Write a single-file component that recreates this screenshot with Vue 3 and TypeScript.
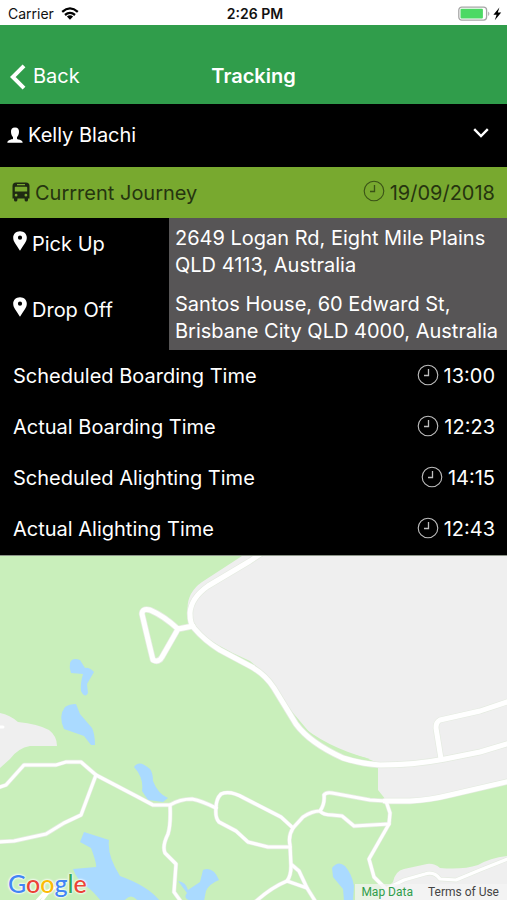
<script setup lang="ts">
interface TimeRow {
  label: string
  time: string
}

const passenger = 'Kelly Blachi'
const journeyDate = '19/09/2018'

const stops: { label: string; address: string }[] = [
  { label: 'Pick Up', address: '2649 Logan Rd, Eight Mile Plains QLD 4113, Australia' },
  { label: 'Drop Off', address: 'Santos House, 60 Edward St, Brisbane City QLD 4000, Australia' },
]

const times: TimeRow[] = [
  { label: 'Scheduled Boarding Time', time: '13:00' },
  { label: 'Actual Boarding Time', time: '12:23' },
  { label: 'Scheduled Alighting Time', time: '14:15' },
  { label: 'Actual Alighting Time', time: '12:43' },
]

const majorRoads: string[] = [
  'M262 -3 L250 5 L208 30 Q191 42 190 57 Q190 68 194 72 Q205 85 220 94 L250 110 Q265 118 274 132 L296 168 Q310 187 343 202 Q362 208 380 209 Q415 209 445 203 L480 196 L510 187',
  'M385 245 L410 245 Q430 244 450 239 L510 225',
  'M441 203 L436 172 Q436 166 440 164 L480 155 L510 145',
  'M193 70 L178 73 L162 101 Q159 107 153 104 Q149 88 142 58 Q142 52 150 54 Q164 60 178 73',
]

const minorRoads: string[] = [
  'M-3 232 L6 229 L24 209 H56 L66 206 L81 206 L96 219 L138 241 L153 249 L170 249 Q180 243 192 243 Q202 245 216 252',
  'M96 219 L81 259 L64 267 L46 278 L14 285 L-3 286',
  'M170 249 Q171 268 168 278 Q162 290 165 297 L176 308 L174 336 L182 347',
  'M216 252 Q216 243 221 238 Q230 234 244 242 L281 261 L293 272 L303 261 Q312 255 320 255 Q325 248 324 239 Q326 236 332 237 L370 244 L386 245',
  'M216 252 Q215 262 219 266 L236 275 L248 286 L268 291 L290 291',
  'M293 272 Q288 280 290 289 L291 310 Q291 320 287 325 Q270 332 253 348',
  'M320 255 Q323 259 332 259 L342 260 L354 270 L389 268',
  'M386 245 L390 257 L389 268 L369 303 L374 321 L386 333 L404 324 L425 318 Q434 315 440 323 L456 324 L480 314 L510 302',
  'M292 309 L299 315 L307 332 L317 348',
  'M287 325 L307 332',
]
</script>

<template>
  <div class="screen">
    <div class="status">
      <div class="carrier">
        <span>Carrier</span>
        <svg width="18" height="13" viewBox="0 0 18 13" aria-hidden="true">
          <g fill="none" stroke="#000" stroke-width="2.3">
            <path d="M1.2 4.8 Q9 -2 16.8 4.8" />
            <path d="M4 8 Q9 3.8 14 8" />
          </g>
          <path d="M5.9 9.6 Q9 7 12.1 9.6 L9 12.8 Z" fill="#000" />
        </svg>
      </div>
      <strong>2:26 PM</strong>
      <div class="power">
        <svg width="44" height="16" viewBox="0 0 44 16" aria-hidden="true">
          <rect x="0.8" y="1.1" width="27.8" height="13" rx="3" fill="#fff" stroke="#a6a6a6" stroke-width="1.3" />
          <rect x="2.5" y="2.8" width="22.4" height="9.6" rx="1" fill="#4cd964" />
          <path d="M30.2 5.4 Q32.6 7.6 30.2 10 Z" fill="#a6a6a6" />
          <path d="M41.4 1.6 L35.4 8.8 H38.6 L36.8 14.2 L43.2 6.6 H39.8 Z" fill="#000" />
        </svg>
      </div>
    </div>

    <header class="nav">
      <button class="back" type="button">
        <svg width="16" height="26" viewBox="0 0 16 26" aria-hidden="true">
          <path d="M14 1.8 L2.8 13 L14 24.2" fill="none" stroke="#fff" stroke-width="4" />
        </svg>
        <span>Back</span>
      </button>
      <h1>Tracking</h1>
    </header>

    <main class="content">
      <button class="passenger" type="button">
        <svg width="16" height="18" viewBox="0 0 16 18" aria-hidden="true">
          <path
            d="M8 0.6 C11 0.6 12.2 2.4 12 5.1 C11.9 7.6 10.9 9.4 10 10.3 V11.8 C10.2 13 15.4 12.2 15.7 15.8 H0.3 C0.6 12.2 5.8 13 6 11.8 V10.3 C5.1 9.4 4.1 7.6 4 5.1 C3.8 2.4 5 0.6 8 0.6 Z"
            fill="#fff"
          />
        </svg>
        <span class="name">{{ passenger }}</span>
        <svg class="chevron" width="16" height="11" viewBox="0 0 16 11" aria-hidden="true">
          <path d="M1.2 1.2 L8 8 L14.8 1.2" fill="none" stroke="#fff" stroke-width="2.4" />
        </svg>
      </button>

      <div class="journey">
        <svg class="bus" width="18" height="20" viewBox="0 0 18 20" aria-hidden="true">
          <path
            fill-rule="evenodd"
            d="M4 0.5 H14 Q17.5 0.5 17.5 4 V16.5 H16 V18 Q16 19.5 14.3 19.5 Q12.6 19.5 12.6 18 V16.5 H5.4 V18 Q5.4 19.5 3.7 19.5 Q2 19.5 2 18 V16.5 H0.5 V4 Q0.5 0.5 4 0.5 Z M5 2 V3.2 H13 V2 Z M3.6 4.8 Q2.8 4.8 2.8 5.6 V9.6 H15.2 V5.6 Q15.2 4.8 14.4 4.8 Z M4.1 11.8 A1.4 1.4 0 1 0 4.1 14.6 A1.4 1.4 0 1 0 4.1 11.8 Z M13.9 11.8 A1.4 1.4 0 1 0 13.9 14.6 A1.4 1.4 0 1 0 13.9 11.8 Z"
            fill="#1f2a12"
          />
        </svg>
        <h2>Currrent Journey</h2>
        <span class="stamp">
          <svg width="22" height="22" viewBox="0 0 22 22" aria-hidden="true">
            <g fill="none" stroke="currentColor">
              <circle cx="11" cy="11" r="9.8" stroke-width="1.1" />
              <path d="M11.5 5 V11.5 H7" stroke-width="1.3" />
            </g>
          </svg>
          <span class="value">{{ journeyDate }}</span>
        </span>
      </div>

      <dl class="stops">
        <div v-for="stop in stops" :key="stop.label" class="stop">
          <dt>
            <svg width="14" height="20" viewBox="0 0 14 20" aria-hidden="true">
              <path
                fill-rule="evenodd"
                d="M7 0.3 C11 0.3 13.8 3.1 13.8 6.7 C13.8 10.8 10.6 13.5 7 19.8 C3.4 13.5 0.2 10.8 0.2 6.7 C0.2 3.1 3 0.3 7 0.3 Z M7 4.6 A2.1 2.1 0 1 0 7 8.8 A2.1 2.1 0 1 0 7 4.6 Z"
                fill="#fff"
              />
            </svg>
            <span>{{ stop.label }}</span>
          </dt>
          <dd>{{ stop.address }}</dd>
        </div>
      </dl>

      <dl class="times">
        <div v-for="row in times" :key="row.label" class="time">
          <dt>{{ row.label }}</dt>
          <dd class="stamp">
            <svg width="22" height="22" viewBox="0 0 22 22" aria-hidden="true">
              <g fill="none" stroke="currentColor">
                <circle cx="11" cy="11" r="9.8" stroke-width="1.1" />
                <path d="M11.5 5 V11.5 H7" stroke-width="1.3" />
              </g>
            </svg>
            <span class="value">{{ row.time }}</span>
          </dd>
        </div>
      </dl>
    </main>

    <section class="map" aria-label="Map">
      <svg class="tiles" viewBox="0 0 507 345" preserveAspectRatio="xMidYMin slice" aria-hidden="true">
        <rect width="507" height="345" fill="#c9efbb" />
        <g fill="#efefef">
          <path d="M242 0 H507 V227 L450 238 L410 244 H386 L378 234 V207 L366 202 Q335 195 310 177 L294 158 L271 128 Q262 114 250 109 L215 91 Q200 81 194 72 L188 58 Q185 38 202 26 Z" />
          <path d="M0 157 Q10 159 18 166 Q38 168 49 174 Q57 180 57 190 H30 Q18 192 10 203 L0 212 Z" />
          <path d="M378 345 L386 333 L393 326 Q395 315 404 313 L427 308 Q434 307 440 312 Q463 314 478 309 Q490 302 507 300 V345 Z" />
        </g>
        <g fill="#aadaff">
          <path d="M70 107 Q72 101 80 104 L85 112 Q89 111 94 116 L87 128 L88 137 Q85 143 81 135 Q80 128 83 118 L71 117 Q69 112 70 107 Z" />
          <path d="M65 151 Q69 148 76 148 L80 158 L92 172 Q95 178 95 189 H91 L84 180 L64 173 Q58 160 65 151 Z" />
          <path d="M134 211 Q139 203 150 213 Q153 217 153 225 Q158 238 168 242 L163 246 L148 244 L142 235 Q144 222 134 211 Z" />
          <path d="M84 276 L109 284 Q107 300 120 320 Q148 330 160 345 H101 Q93 335 86 330 Q77 324 73 313 L96 311 Q97 308 91 292 L80 286 Z" />
          <path d="M178 325 Q186 326 188 334 L200 326 L203 314 Q213 310 219 324 Q209 328 206 335 L204 345 H192 Q182 343 187 337 Z" />
          <path d="M332 312 Q338 304 345 310 Q352 318 354 330 L353 345 H344 L343 333 L333 321 Z" />
        </g>
        <path d="M124 345 Q131 336 138 345 Z" fill="#c9efbb" />
        <path d="M192 71 Q215 90 250 105 L266 118 L253 113 Q215 95 192 71 Z" fill="#c9efbb" />
        <path d="M297 166 Q325 191 370 203 Q325 202 297 168 Z" fill="#c9efbb" />
        <g fill="none" stroke="#e4ebe0" stroke-linejoin="round" stroke-linecap="round">
          <path v-for="d in majorRoads" :key="d" :d="d" stroke-width="6.4" />
          <path v-for="d in minorRoads" :key="d" :d="d" stroke-width="4.4" />
        </g>
        <g fill="none" stroke="#fff" stroke-linejoin="round" stroke-linecap="round">
          <path v-for="d in majorRoads" :key="d" :d="d" stroke-width="5" />
          <path v-for="d in minorRoads" :key="d" :d="d" stroke-width="3.2" />
          <path d="M-3 171 H3 M35 347 L44 337 L54 332 M40 347 L49 335" stroke-width="3" />
        </g>
      </svg>
      <div class="google">
        <span class="blue">G</span><span class="red">o</span><span class="yellow">o</span><span class="blue">g</span><span class="green">l</span><span class="red">e</span>
      </div>
      <div class="legal">
        <a class="data" href="#">Map Data</a>
        <a href="#">Terms of Use</a>
      </div>
    </section>
  </div>
</template>

<style>
body {
  margin: 0;
}
</style>

<style scoped>
.screen {
  display: flex;
  flex-direction: column;
  min-height: 100vh;
  background: #000;
  color: #fff;
  font-family: Inter, "Liberation Sans", sans-serif;
  font-size: 20px;
  line-height: 27px;
}

button {
  border: 0;
  padding: 0;
  background: none;
  color: inherit;
  font: inherit;
  text-align: left;
}

h1,
h2,
dl,
dd {
  margin: 0;
  font-size: inherit;
}

svg {
  flex: none;
}

.status {
  display: grid;
  grid-template-columns: 1fr auto 1fr;
  align-items: center;
  height: 25px;
  padding: 2px 5px 0 8px;
  box-sizing: border-box;
  background: #fff;
  color: #111;
  font-size: 14px;
  line-height: 16px;
}

.status strong {
  font-weight: 600;
}

.carrier {
  display: flex;
  align-items: center;
  gap: 7px;
}

.power {
  display: flex;
  justify-content: flex-end;
}

.nav {
  display: grid;
  grid-template-columns: 1fr auto 1fr;
  align-items: center;
  height: 79px;
  padding: 24px 10px 0;
  box-sizing: border-box;
  background: #309d4b;
}

.nav h1 {
  font-weight: 600;
}

.back {
  display: flex;
  align-items: center;
  gap: 7px;
}

.passenger {
  display: flex;
  align-items: center;
  gap: 5px;
  width: 100%;
  height: 63px;
  padding: 0 18px 0 7px;
}

.name {
  flex: 1;
}

.chevron {
  margin-bottom: 4px;
}

.journey {
  display: flex;
  align-items: center;
  gap: 5px;
  height: 51px;
  padding: 1px 12px 0;
  box-sizing: border-box;
  background: #78a92f;
  color: #26350f;
}

.bus {
  margin-bottom: 3px;
}

.journey h2 {
  flex: 1;
  font-weight: 400;
}

.stamp {
  display: flex;
  align-items: center;
  gap: 5px;
}

.stamp svg {
  margin-bottom: 4px;
  opacity: 0.75;
}

.stop {
  display: grid;
  grid-template-columns: 1fr 2fr;
  min-height: 66px;
}

.stop dt {
  display: flex;
  align-items: flex-start;
  gap: 5px;
  padding: 13px 0 0 13px;
}

.stop dd {
  padding: 7px 6px 5px;
  background: #575556;
}

.times {
  padding-top: 1px;
}

.time {
  display: flex;
  align-items: center;
  justify-content: space-between;
  height: 51px;
  padding: 0 12px 0 13px;
}

.map {
  position: relative;
  display: flex;
  flex: 1;
  align-items: flex-end;
  justify-content: space-between;
  min-height: 345px;
  overflow: hidden;
  border-top: 1px solid #8c9488;
  box-sizing: border-box;
}

.tiles {
  position: absolute;
  inset: 0;
  width: 100%;
  height: 100%;
}

.google {
  position: relative;
  padding: 0 0 3px 8px;
  font-family: Lato, sans-serif;
  font-size: 25px;
  font-weight: 500;
  line-height: 28px;
  text-shadow: 0 0 2px #fff, 0 0 2px #fff, 0 0 3px #fff;
}

.blue {
  color: #4285f4;
}

.red {
  color: #ea4335;
}

.yellow {
  color: #fbbc05;
}

.green {
  color: #34a853;
}

.legal {
  position: relative;
  display: flex;
  gap: 15px;
  padding: 0 8px 0 6px;
  background: rgba(245, 245, 245, 0.7);
  font-family: Roboto, sans-serif;
  font-size: 12px;
  line-height: 16px;
}

.legal a {
  color: #444;
  text-decoration: none;
}

.legal .data {
  color: #309d4b;
}
</style>
